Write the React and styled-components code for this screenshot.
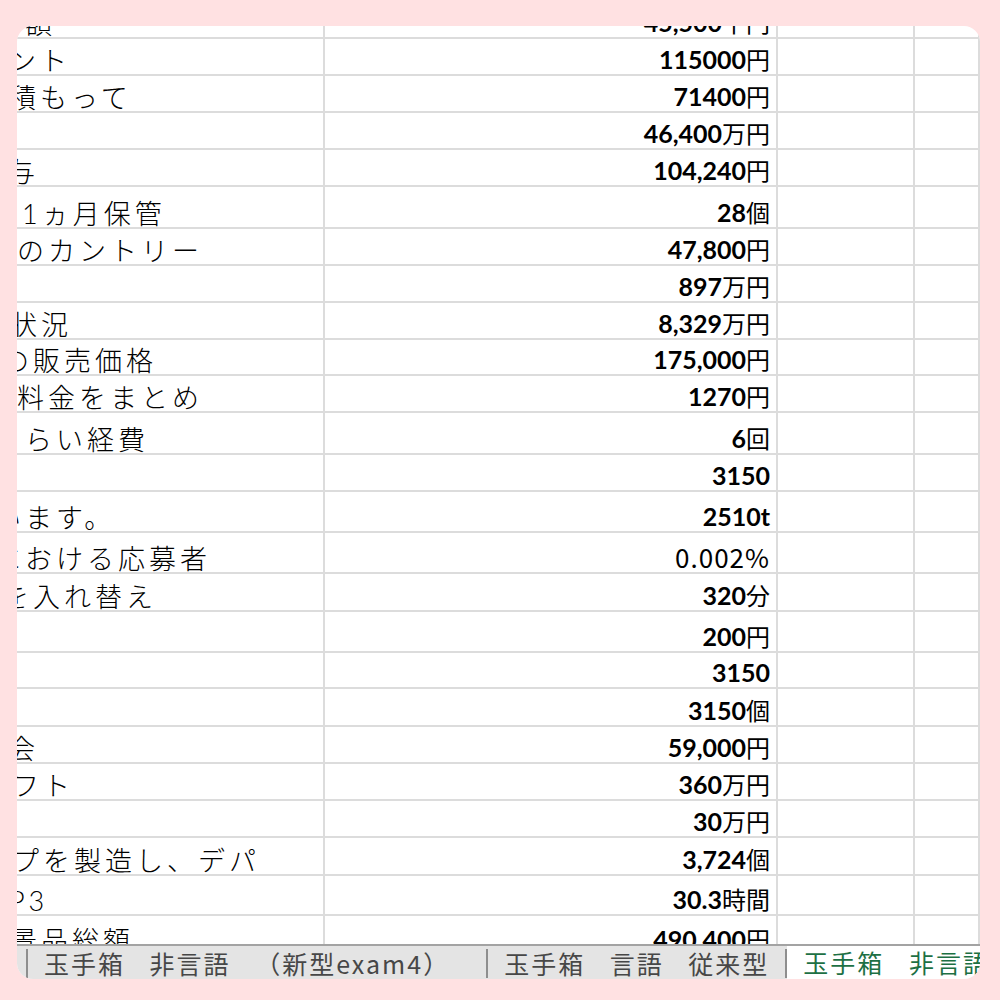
import styled, { createGlobalStyle } from "styled-components";

const GlobalStyle = createGlobalStyle`
  body {
    margin: 0;
    background: #ffe1e2;
    font-family: "Noto Sans CJK JP", sans-serif;
  }
`;

const rows = [
  { h: 37, label: "額", shift: 8, num: "45,500", unit: "千円" },
  { h: 37, label: "ント", shift: -8, num: "115000", unit: "円" },
  { h: 37, label: "積もって", shift: -8, num: "71400", unit: "円" },
  { h: 37, label: "", shift: 0, num: "46,400", unit: "万円" },
  { h: 37, label: "与", shift: -9, num: "104,240", unit: "円" },
  { h: 42, label: "で1ヵ月保管", shift: -26, num: "28", unit: "個" },
  { h: 37, label: "のカントリー", shift: 0, num: "47,800", unit: "円" },
  { h: 37, label: "", shift: 0, num: "897", unit: "万円" },
  { h: 37, label: "状況", shift: -7, num: "8,329", unit: "万円" },
  { h: 36, label: "の販売価格", shift: -15, num: "175,000", unit: "円" },
  { h: 37, label: "料金をまとめ", shift: 0, num: "1270", unit: "円" },
  { h: 42, label: "らい経費", shift: 8, num: "6", unit: "回" },
  { h: 37, label: "", shift: 0, num: "3150", unit: "" },
  { h: 41, label: "います。", shift: -23, num: "2510t", unit: "" },
  { h: 41, label: "における応募者", shift: -23, plain: "0.002%" },
  { h: 38, label: "を入れ替え", shift: -15, num: "320", unit: "分" },
  { h: 41, label: "", shift: 0, num: "200", unit: "円" },
  { h: 36, label: "", shift: 0, num: "3150", unit: "" },
  { h: 38, label: "", shift: 0, num: "3150", unit: "個" },
  { h: 37, label: "会", shift: -9, num: "59,000", unit: "円" },
  { h: 37, label: "フト", shift: -5, num: "360", unit: "万円" },
  { h: 37, label: "", shift: 0, num: "30", unit: "万円" },
  { h: 38, label: "プを製造し、デパ", shift: -5, num: "3,724", unit: "個" },
  { h: 40, label: "P3", shift: -8, num: "30.3", unit: "時間" },
  { h: 40, label: "景品総額", shift: -7, num: "490,400", unit: "円" },
];

const Card = styled.div`
  margin: 26px 0 0 17px;
  width: 963px;
  height: 953px;
  background: #fff;
  border-radius: 16px;
  overflow: hidden;
  display: flex;
  flex-direction: column;
`;

const Sheet = styled.div`
  flex: 1;
  overflow: hidden;
`;

const Rows = styled.div`
  margin-top: -24px;
`;

const Row = styled.div`
  display: grid;
  grid-template-columns: 308px 453px 137px 1fr;
  height: ${(p) => p.$h}px;
  box-sizing: border-box;
  border-bottom: 2px solid #dcdcdc;
`;

const Cell = styled.div`
  display: flex;
  align-items: flex-end;
  overflow: hidden;
  white-space: nowrap;
  box-sizing: border-box;
  border-right: 2px solid #dcdcdc;
`;

const LabelCell = styled(Cell)`
  padding-bottom: 0;
`;

const ValueCell = styled(Cell)`
  justify-content: flex-end;
  padding: 0 6px 2px 0;
`;

const Label = styled.span`
  margin-left: ${(p) => p.$shift}px;
  font-family: "Lato", "Noto Sans CJK JP", sans-serif;
  font-size: 27px;
  font-weight: 300;
  letter-spacing: 4px;
  line-height: 1;
  color: #000;
`;

const Value = styled.span`
  line-height: 1;
  color: #000;
`;

const Num = styled.span`
  font-family: "Lato", sans-serif;
  font-weight: 700;
  font-size: 25px;
`;

const Unit = styled.span`
  font-family: "Noto Sans CJK JP", sans-serif;
  font-weight: 400;
  font-size: 24px;
`;

const Plain = styled.span`
  font-family: "Noto Sans CJK JP", sans-serif;
  font-weight: 400;
  font-size: 26px;
  letter-spacing: 1px;
  line-height: 1;
`;

const TabBar = styled.div`
  height: 35px;
  flex-shrink: 0;
  display: flex;
  align-items: stretch;
  background: #e4e4e4;
  border-top: 2px solid #a3a3a3;
  box-sizing: border-box;
  white-space: nowrap;
  overflow: hidden;
`;

const Stub = styled.div`
  width: 9px;
  flex-shrink: 0;
`;

const Sep = styled.div`
  width: 2px;
  flex-shrink: 0;
  margin: 3px 0 1px;
  background: #8e8e8e;
`;

const Tab = styled.div`
  flex-shrink: 0;
  display: flex;
  align-items: center;
  padding: 0 ${(p) => p.$pad}px 0 16px;
  font-size: 25px;
  letter-spacing: 2px;
  word-spacing: 17px;
  color: ${(p) => (p.$active ? "#1d7044" : "#474747")};
  background: ${(p) => (p.$active ? "#fff" : "transparent")};
  margin-top: ${(p) => (p.$active ? "-2px" : "0")};
`;

export default function App() {
  return (
    <>
      <GlobalStyle />
      <Card>
        <Sheet>
          <Rows>
            {rows.map((r, i) => (
              <Row key={i} $h={r.h}>
                <LabelCell>
                  <Label $shift={r.shift}>{r.label}</Label>
                </LabelCell>
                <ValueCell>
                  {r.plain ? (
                    <Plain>{r.plain}</Plain>
                  ) : (
                    <Value>
                      <Num>{r.num}</Num>
                      {r.unit && <Unit>{r.unit}</Unit>}
                    </Value>
                  )}
                </ValueCell>
                <Cell />
                <Cell />
              </Row>
            ))}
          </Rows>
        </Sheet>
        <TabBar>
          <Stub />
          <Sep />
          <Tab $pad={36}>玉手箱 非言語 （新型exam4）</Tab>
          <Sep />
          <Tab $pad={16}>玉手箱 言語 従来型</Tab>
          <Sep />
          <Tab $active $pad={16}>玉手箱 非言語 従来型</Tab>
        </TabBar>
      </Card>
    </>
  );
}
